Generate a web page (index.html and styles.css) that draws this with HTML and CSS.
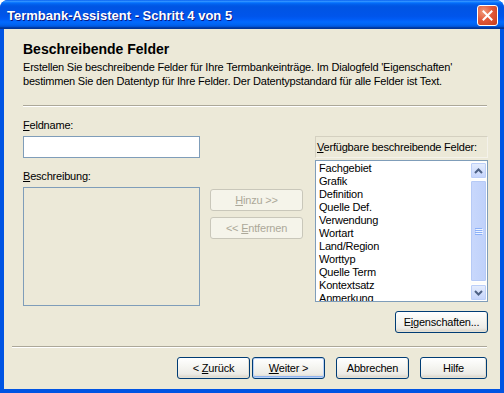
FILE: index.html
```html
<!DOCTYPE html>
<html lang="de">
<head>
<meta charset="utf-8">
<title>Termbank-Assistent</title>
<link rel="stylesheet" href="styles.css">
</head>
<body>
<div class="window">
  <div class="titlebar">
    <span class="title">Termbank-Assistent - Schritt 4 von 5</span>
    <span class="close"><svg width="11" height="11" viewBox="0 0 11 11"><path d="M1.5 1.5 L9.5 9.5 M9.5 1.5 L1.5 9.5" stroke="#fff" stroke-width="2" stroke-linecap="square"/></svg></span>
  </div>
  <div class="client">
    <div class="header">
      <h1 class="heading">Beschreibende Felder</h1>
      <p class="desc">Erstellen Sie beschreibende Felder für Ihre Termbankeinträge. Im Dialogfeld 'Eigenschaften'<br>bestimmen Sie den Datentyp für Ihre Felder. Der Datentypstandard für alle Felder ist Text.</p>
    </div>
    <div class="sep sep-top"></div>
    <div class="main">
      <div class="col-left">
        <div class="label"><u>F</u>eldname:</div>
        <div class="textbox"></div>
        <div class="label label-desc"><u>B</u>eschreibung:</div>
        <div class="textarea"></div>
      </div>
      <div class="col-mid">
        <button class="btn btn-disabled"><span><u>H</u>inzu &gt;&gt;</span></button>
        <button class="btn btn-disabled"><span>&lt;&lt; <u>E</u>ntfernen</span></button>
      </div>
      <div class="col-right">
        <div class="list-label"><u>V</u>erfügbare beschreibende Felder:</div>
        <div class="listbox">
          <ul class="items">
            <li>Fachgebiet</li>
            <li>Grafik</li>
            <li>Definition</li>
            <li>Quelle Def.</li>
            <li>Verwendung</li>
            <li>Wortart</li>
            <li>Land/Region</li>
            <li>Worttyp</li>
            <li>Quelle Term</li>
            <li>Kontextsatz</li>
            <li>Anmerkung</li>
          </ul>
          <div class="scrollbar">
            <div class="sb-btn"><svg width="9" height="6" viewBox="0 0 9 6"><path d="M1 5 L4.5 1.5 L8 5" fill="none" stroke="#4D6185" stroke-width="2"/></svg></div>
            <div class="sb-track">
              <div class="sb-thumb"><svg width="8" height="7" viewBox="0 0 8 7"><path d="M0 0.5H7M0 2.5H7M0 4.5H7M0 6.5H7" stroke="#8CB0F8" stroke-width="1"/><path d="M1 1.5H8M1 3.5H8M1 5.5H8" stroke="#EEF4FE" stroke-width="1"/></svg></div>
            </div>
            <div class="sb-btn"><svg width="9" height="6" viewBox="0 0 9 6"><path d="M1 1 L4.5 4.5 L8 1" fill="none" stroke="#4D6185" stroke-width="2"/></svg></div>
          </div>
        </div>
        <div class="props-row">
          <button class="btn"><span>E<u>i</u>genschaften...</span></button>
        </div>
      </div>
    </div>
    <div class="sep sep-bottom"></div>
    <div class="footer">
      <button class="btn btn-nav"><span>&lt; <u>Z</u>urück</span></button>
      <button class="btn btn-nav btn-default"><span><u>W</u>eiter &gt;</span></button>
      <button class="btn btn-nav btn-cancel"><span>Abbrechen</span></button>
      <button class="btn btn-nav btn-help"><span>Hilfe</span></button>
    </div>
  </div>
</div>
</body>
</html>
```
FILE: styles.css
```css
html, body {
  margin: 0;
  padding: 0;
  background: #ffffff;
}
.window {
  width: 504px;
  height: 393px;
  box-sizing: border-box;
  background: #0054E3;
  border-radius: 8px 8px 0 0;
  overflow: hidden;
  display: flex;
  flex-direction: column;
  font-family: "Liberation Sans", Arial, sans-serif;
  font-size: 11px;
  letter-spacing: -0.2px;
  color: #000;
}
.titlebar {
  height: 29px;
  flex: none;
  display: flex;
  align-items: center;
  padding: 0 6px 0 7px;
  background: linear-gradient(#0058EE 0%, #3593FF 4%, #288EFF 6%, #127DFF 8%, #036FFC 10%, #0262EE 14%, #0057E5 20%, #0054E3 24%, #0055EB 56%, #005BF5 66%, #026AFE 76%, #0062EF 86%, #0052D6 92%, #0040AB 94%, #003092 100%);
}
.title {
  flex: 1;
  color: #fff;
  font-weight: bold;
  font-size: 13px;
  letter-spacing: 0;
  text-shadow: 1px 1px 0 #0A1883;
  padding-top: 1px;
}
.close {
  width: 19px;
  height: 19px;
  border: 1px solid #fff;
  border-radius: 3px;
  background: radial-gradient(circle at 30% 30%, #F09A7A 0%, #E2593A 45%, #C63C1B 100%);
  display: flex;
  align-items: center;
  justify-content: center;
  margin-top: 1px;
}
.client {
  flex: 1;
  margin: 0 4px 4px 4px;
  background: #ECE9D8;
  display: flex;
  flex-direction: column;
}
.header {
  padding: 12px 19px 0 19px;
}
.heading {
  margin: 0;
  font-size: 14px;
  line-height: 17px;
  letter-spacing: 0;
  font-weight: bold;
}
.desc {
  margin: 2px 0 0 0;
  line-height: 14px;
}
.sep {
  height: 0;
  border-top: 1px solid #ACA899;
  border-bottom: 1px solid #FFFFFF;
}
.sep-top {
  margin: 17px 13px 0 19px;
}
.sep-bottom {
  margin: 0 13px 0 8px;
}
.main {
  height: 239px;
  display: flex;
  padding-left: 19px;
}
.col-left {
  width: 177px;
  padding-top: 12px;
}
.label {
  line-height: 13px;
  height: 13px;
}
.textbox {
  margin-top: 4px;
  height: 20px;
  border: 1px solid #7F9DB9;
  background: #fff;
}
.label-desc {
  margin-top: 12px;
}
.textarea {
  margin-top: 4px;
  height: 117px;
  border: 1px solid #7F9DB9;
  background: #ECE9D8;
}
.col-mid {
  width: 93px;
  margin-left: 10px;
  padding-top: 82px;
  display: flex;
  flex-direction: column;
  gap: 6px;
}
.col-right {
  width: 173px;
  margin-left: 12px;
  padding-top: 29px;
}
.list-label {
  height: 20px;
  line-height: 20px;
  padding-left: 1px;
  border: 1px solid #D4D0C0;
  border-right-color: #F4F2EA;
  border-bottom-color: #F4F2EA;
  box-sizing: content-box;
}
.listbox {
  margin-top: 2px;
  height: 140px;
  border: 1px solid #7F9DB9;
  background: #fff;
  display: flex;
  overflow: hidden;
}
.items {
  flex: 1;
  list-style: none;
  margin: 0;
  padding: 1px 0 0 3px;
  overflow: hidden;
}
.items li {
  height: 13px;
  line-height: 13px;
  white-space: nowrap;
}
.scrollbar {
  width: 17px;
  display: flex;
  flex-direction: column;
  background: #FDFDFA;
}
.sb-btn {
  height: 15px;
  margin: 1px 0 0 0;
  border: 1px solid #fff;
  border-radius: 2px;
  background: linear-gradient(#E6EEFD, #C3D3FC);
  box-shadow: inset 0 0 0 1px #BCCFF8;
  display: flex;
  align-items: center;
  justify-content: center;
}
.sb-track {
  flex: 1;
  display: flex;
  padding: 1px 0;
}
.sb-thumb {
  flex: 1;
  border: 1px solid #fff;
  border-radius: 2px;
  background: linear-gradient(90deg, #C9D8FC, #BFD1FB);
  box-shadow: inset 0 0 0 1px #B6CAF6;
  display: flex;
  align-items: center;
  justify-content: center;
}
.props-row {
  margin-top: 9px;
  display: flex;
  justify-content: flex-end;
}
.btn {
  font-family: "Liberation Sans", Arial, sans-serif;
  font-size: 11px;
  letter-spacing: -0.2px;
  color: #000;
  height: 22px;
  width: 93px;
  padding: 0;
  border: 1px solid #003C74;
  border-radius: 3px;
  background: linear-gradient(#FFFFFF 0%, #F5F5F1 45%, #ECEBE6 80%, #D8D2C6 100%);
  box-shadow: inset -1px -1px 0 #E3E0D5;
  display: flex;
  align-items: center;
  justify-content: center;
}
.btn-disabled {
  border-color: #C9C7BA;
  background: #F5F4EA;
  color: #ACA899;
  box-shadow: none;
}
.footer {
  display: flex;
  justify-content: flex-end;
  padding: 9px 13px 0 0;
}
.btn-nav {
  width: 73px;
}
.btn-default {
  margin-left: 2px;
  box-shadow: inset 0 0 0 1px #B9D1F6, inset 0 -2px 0 #8EB2EE;
}
.btn-cancel {
  margin-left: 11px;
}
.btn-help {
  margin-left: 11px;
  width: 67px;
}
```
